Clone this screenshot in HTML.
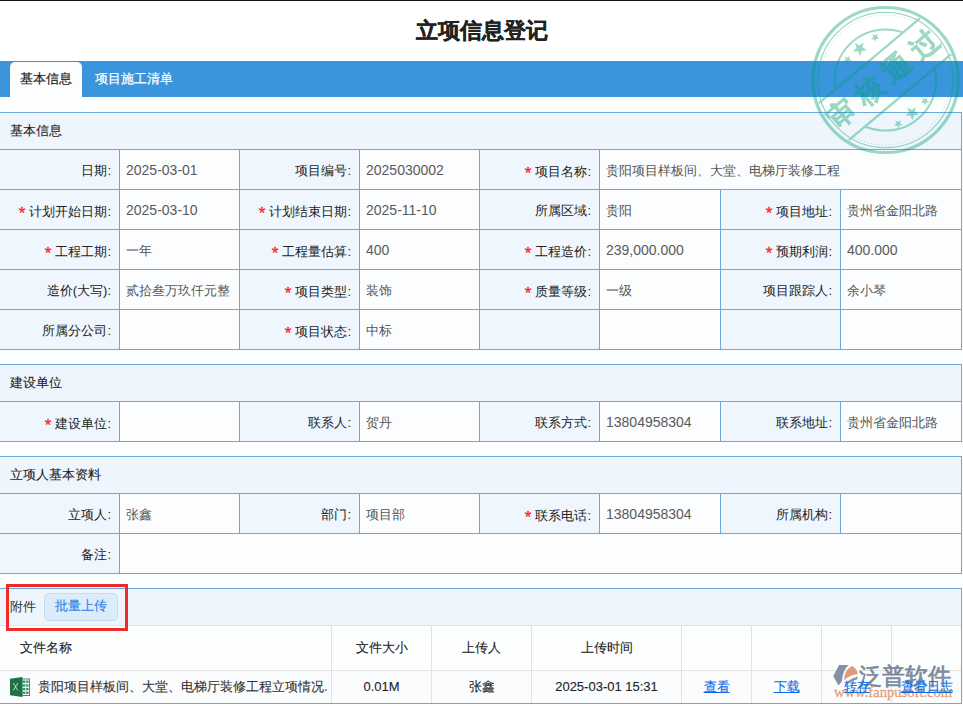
<!DOCTYPE html>
<html><head><meta charset="utf-8">
<style>
html,body{margin:0;padding:0}
body{width:963px;height:706px;overflow:hidden;position:relative;background:#fbfdfe;font-family:"Liberation Sans",sans-serif;font-size:13px;color:#333}
.ln{position:absolute}
.sh{position:absolute;left:0;width:961px;background:#eff5fd;line-height:36px;text-indent:10px;color:#222;-webkit-text-stroke:0.1px #222}
.lb{position:absolute;text-align:right;line-height:41px;color:#222;box-sizing:border-box;padding-right:8px;white-space:nowrap}
.vl{position:absolute;text-align:left;line-height:41px;color:#555;box-sizing:border-box;padding-left:6px;white-space:nowrap}
.st{color:#f22;font-size:17px;margin-right:4px;position:relative;top:3px;-webkit-text-stroke:0.3px #f22}
.nm{font-size:14px;color:#5a5a5a}
.at{position:absolute;text-align:center;white-space:nowrap;color:#222;-webkit-text-stroke:0.1px currentColor}
.nm2{font-size:13px}
#fj{position:absolute;left:10px;top:589px;line-height:36px;color:#333}
#upbtn{position:absolute;left:44px;top:593px;width:74px;height:28px;box-sizing:border-box;border:1px solid #c4dcf2;background:#ddecfa;border-radius:5px;color:#2f86e0;text-align:center;line-height:24px;-webkit-text-stroke:0.15px #2f86e0}
#redbox{position:absolute;left:6px;top:584px;width:116px;height:41px;border:3px solid #ee2a2a}
#wm{position:absolute;left:832px;top:662px;width:125px;height:40px;pointer-events:none}
#wmt{position:absolute;left:27px;top:1px;font-size:23px;line-height:26px;color:rgba(115,128,152,0.9);-webkit-text-stroke:0.7px rgba(115,128,152,0.9);letter-spacing:0px;white-space:nowrap}
#wmu{position:absolute;left:2px;top:23px;font-family:"Liberation Serif",serif;font-size:14.6px;line-height:14px;color:rgba(220,140,100,0.8);-webkit-text-stroke:0.3px rgba(220,140,100,0.8);white-space:nowrap}
#topline{position:absolute;left:0;top:0;width:963px;height:1px;background:#111}
#title{position:absolute;left:0;top:15px;width:963px;text-align:center;font-size:21.7px;font-weight:bold;color:#222;line-height:32px;-webkit-text-stroke:0.3px #222}
#tabbar{position:absolute;left:0;top:61px;width:963px;height:36px;background:#3a95dd}
#tab1{position:absolute;left:10px;top:62px;width:72px;height:35px;background:#fbfdfe;border-radius:5px 5px 0 0;text-align:center;line-height:34px;color:#222;-webkit-text-stroke:0.2px #222}
#tab2{position:absolute;left:95px;top:62px;line-height:34px;color:#fff;-webkit-text-stroke:0.2px #fff}
</style></head><body>
<div style="position:absolute;left:0;top:0;width:963px;height:61px;background:#fff"></div>
<div id="topline"></div>
<div id="title">立项信息登记</div>
<div id="tabbar"></div>
<div id="tab1">基本信息</div>
<div id="tab2">项目施工清单</div>
<div class="sh" style="top:113px;height:36px">基本信息</div>
<div class="ln" style="left:0px;top:112px;width:962px;height:1px;background:#6ea8db"></div>
<div class="ln" style="left:0px;top:149px;width:962px;height:1px;background:#6ea8db"></div>
<div class="ln" style="left:961px;top:112px;width:1px;height:38px;background:#6ea8db"></div>
<div class="lb" style="left:0px;top:150px;width:119px;height:39px;background:#eff6fd">日期:</div>
<div class="vl" style="left:120px;top:150px;width:119px;height:39px;background:#fbfdfe"><span class="nm">2025-03-01</span></div>
<div class="lb" style="left:240px;top:150px;width:119px;height:39px;background:#eff6fd">项目编号:</div>
<div class="vl" style="left:360px;top:150px;width:119px;height:39px;background:#fbfdfe"><span class="nm">2025030002</span></div>
<div class="lb" style="left:480px;top:150px;width:119px;height:39px;background:#eff6fd"><span class="st">*</span>项目名称:</div>
<div class="vl" style="left:600px;top:150px;width:361px;height:39px;background:#fbfdfe">贵阳项目样板间、大堂、电梯厅装修工程</div>
<div class="ln" style="left:0px;top:189px;width:962px;height:1px;background:#6ea8db"></div>
<div class="ln" style="left:119px;top:149px;width:1px;height:41px;background:#6ea8db"></div>
<div class="ln" style="left:239px;top:149px;width:1px;height:41px;background:#6ea8db"></div>
<div class="ln" style="left:359px;top:149px;width:1px;height:41px;background:#6ea8db"></div>
<div class="ln" style="left:479px;top:149px;width:1px;height:41px;background:#6ea8db"></div>
<div class="ln" style="left:599px;top:149px;width:1px;height:41px;background:#6ea8db"></div>
<div class="ln" style="left:961px;top:149px;width:1px;height:41px;background:#6ea8db"></div>
<div class="lb" style="left:0px;top:190px;width:119px;height:39px;background:#eff6fd"><span class="st">*</span>计划开始日期:</div>
<div class="vl" style="left:120px;top:190px;width:119px;height:39px;background:#fbfdfe"><span class="nm">2025-03-10</span></div>
<div class="lb" style="left:240px;top:190px;width:119px;height:39px;background:#eff6fd"><span class="st">*</span>计划结束日期:</div>
<div class="vl" style="left:360px;top:190px;width:119px;height:39px;background:#fbfdfe"><span class="nm">2025-11-10</span></div>
<div class="lb" style="left:480px;top:190px;width:119px;height:39px;background:#eff6fd">所属区域:</div>
<div class="vl" style="left:600px;top:190px;width:120px;height:39px;background:#fbfdfe">贵阳</div>
<div class="lb" style="left:721px;top:190px;width:119px;height:39px;background:#eff6fd"><span class="st">*</span>项目地址:</div>
<div class="vl" style="left:841px;top:190px;width:120px;height:39px;background:#fbfdfe">贵州省金阳北路</div>
<div class="ln" style="left:0px;top:229px;width:962px;height:1px;background:#6ea8db"></div>
<div class="ln" style="left:119px;top:189px;width:1px;height:41px;background:#6ea8db"></div>
<div class="ln" style="left:239px;top:189px;width:1px;height:41px;background:#6ea8db"></div>
<div class="ln" style="left:359px;top:189px;width:1px;height:41px;background:#6ea8db"></div>
<div class="ln" style="left:479px;top:189px;width:1px;height:41px;background:#6ea8db"></div>
<div class="ln" style="left:599px;top:189px;width:1px;height:41px;background:#6ea8db"></div>
<div class="ln" style="left:720px;top:189px;width:1px;height:41px;background:#6ea8db"></div>
<div class="ln" style="left:840px;top:189px;width:1px;height:41px;background:#6ea8db"></div>
<div class="ln" style="left:961px;top:189px;width:1px;height:41px;background:#6ea8db"></div>
<div class="lb" style="left:0px;top:230px;width:119px;height:39px;background:#eff6fd"><span class="st">*</span>工程工期:</div>
<div class="vl" style="left:120px;top:230px;width:119px;height:39px;background:#fbfdfe">一年</div>
<div class="lb" style="left:240px;top:230px;width:119px;height:39px;background:#eff6fd"><span class="st">*</span>工程量估算:</div>
<div class="vl" style="left:360px;top:230px;width:119px;height:39px;background:#fbfdfe"><span class="nm">400</span></div>
<div class="lb" style="left:480px;top:230px;width:119px;height:39px;background:#eff6fd"><span class="st">*</span>工程造价:</div>
<div class="vl" style="left:600px;top:230px;width:120px;height:39px;background:#fbfdfe"><span class="nm">239,000.000</span></div>
<div class="lb" style="left:721px;top:230px;width:119px;height:39px;background:#eff6fd"><span class="st">*</span>预期利润:</div>
<div class="vl" style="left:841px;top:230px;width:120px;height:39px;background:#fbfdfe"><span class="nm">400.000</span></div>
<div class="ln" style="left:0px;top:269px;width:962px;height:1px;background:#6ea8db"></div>
<div class="ln" style="left:119px;top:229px;width:1px;height:41px;background:#6ea8db"></div>
<div class="ln" style="left:239px;top:229px;width:1px;height:41px;background:#6ea8db"></div>
<div class="ln" style="left:359px;top:229px;width:1px;height:41px;background:#6ea8db"></div>
<div class="ln" style="left:479px;top:229px;width:1px;height:41px;background:#6ea8db"></div>
<div class="ln" style="left:599px;top:229px;width:1px;height:41px;background:#6ea8db"></div>
<div class="ln" style="left:720px;top:229px;width:1px;height:41px;background:#6ea8db"></div>
<div class="ln" style="left:840px;top:229px;width:1px;height:41px;background:#6ea8db"></div>
<div class="ln" style="left:961px;top:229px;width:1px;height:41px;background:#6ea8db"></div>
<div class="lb" style="left:0px;top:270px;width:119px;height:39px;background:#eff6fd">造价(大写):</div>
<div class="vl" style="left:120px;top:270px;width:119px;height:39px;background:#fbfdfe">贰拾叁万玖仟元整</div>
<div class="lb" style="left:240px;top:270px;width:119px;height:39px;background:#eff6fd"><span class="st">*</span>项目类型:</div>
<div class="vl" style="left:360px;top:270px;width:119px;height:39px;background:#fbfdfe">装饰</div>
<div class="lb" style="left:480px;top:270px;width:119px;height:39px;background:#eff6fd"><span class="st">*</span>质量等级:</div>
<div class="vl" style="left:600px;top:270px;width:120px;height:39px;background:#fbfdfe">一级</div>
<div class="lb" style="left:721px;top:270px;width:119px;height:39px;background:#eff6fd">项目跟踪人:</div>
<div class="vl" style="left:841px;top:270px;width:120px;height:39px;background:#fbfdfe">余小琴</div>
<div class="ln" style="left:0px;top:309px;width:962px;height:1px;background:#6ea8db"></div>
<div class="ln" style="left:119px;top:269px;width:1px;height:41px;background:#6ea8db"></div>
<div class="ln" style="left:239px;top:269px;width:1px;height:41px;background:#6ea8db"></div>
<div class="ln" style="left:359px;top:269px;width:1px;height:41px;background:#6ea8db"></div>
<div class="ln" style="left:479px;top:269px;width:1px;height:41px;background:#6ea8db"></div>
<div class="ln" style="left:599px;top:269px;width:1px;height:41px;background:#6ea8db"></div>
<div class="ln" style="left:720px;top:269px;width:1px;height:41px;background:#6ea8db"></div>
<div class="ln" style="left:840px;top:269px;width:1px;height:41px;background:#6ea8db"></div>
<div class="ln" style="left:961px;top:269px;width:1px;height:41px;background:#6ea8db"></div>
<div class="lb" style="left:0px;top:310px;width:119px;height:39px;background:#eff6fd">所属分公司:</div>
<div class="vl" style="left:120px;top:310px;width:119px;height:39px;background:#fbfdfe"></div>
<div class="lb" style="left:240px;top:310px;width:119px;height:39px;background:#eff6fd"><span class="st">*</span>项目状态:</div>
<div class="vl" style="left:360px;top:310px;width:119px;height:39px;background:#fbfdfe">中标</div>
<div class="lb" style="left:480px;top:310px;width:119px;height:39px;background:#eff6fd"></div>
<div class="vl" style="left:600px;top:310px;width:120px;height:39px;background:#fbfdfe"></div>
<div class="lb" style="left:721px;top:310px;width:119px;height:39px;background:#eff6fd"></div>
<div class="vl" style="left:841px;top:310px;width:120px;height:39px;background:#fbfdfe"></div>
<div class="ln" style="left:0px;top:349px;width:962px;height:1px;background:#6ea8db"></div>
<div class="ln" style="left:119px;top:309px;width:1px;height:41px;background:#6ea8db"></div>
<div class="ln" style="left:239px;top:309px;width:1px;height:41px;background:#6ea8db"></div>
<div class="ln" style="left:359px;top:309px;width:1px;height:41px;background:#6ea8db"></div>
<div class="ln" style="left:479px;top:309px;width:1px;height:41px;background:#6ea8db"></div>
<div class="ln" style="left:599px;top:309px;width:1px;height:41px;background:#6ea8db"></div>
<div class="ln" style="left:720px;top:309px;width:1px;height:41px;background:#6ea8db"></div>
<div class="ln" style="left:840px;top:309px;width:1px;height:41px;background:#6ea8db"></div>
<div class="ln" style="left:961px;top:309px;width:1px;height:41px;background:#6ea8db"></div>
<div class="sh" style="top:365px;height:36px">建设单位</div>
<div class="ln" style="left:0px;top:364px;width:962px;height:1px;background:#6ea8db"></div>
<div class="ln" style="left:0px;top:401px;width:962px;height:1px;background:#6ea8db"></div>
<div class="ln" style="left:961px;top:364px;width:1px;height:38px;background:#6ea8db"></div>
<div class="lb" style="left:0px;top:402px;width:119px;height:39px;background:#eff6fd"><span class="st">*</span>建设单位:</div>
<div class="vl" style="left:120px;top:402px;width:119px;height:39px;background:#fbfdfe"></div>
<div class="lb" style="left:240px;top:402px;width:119px;height:39px;background:#eff6fd">联系人:</div>
<div class="vl" style="left:360px;top:402px;width:119px;height:39px;background:#fbfdfe">贺丹</div>
<div class="lb" style="left:480px;top:402px;width:119px;height:39px;background:#eff6fd">联系方式:</div>
<div class="vl" style="left:600px;top:402px;width:120px;height:39px;background:#fbfdfe"><span class="nm">13804958304</span></div>
<div class="lb" style="left:721px;top:402px;width:119px;height:39px;background:#eff6fd">联系地址:</div>
<div class="vl" style="left:841px;top:402px;width:120px;height:39px;background:#fbfdfe">贵州省金阳北路</div>
<div class="ln" style="left:0px;top:441px;width:962px;height:1px;background:#6ea8db"></div>
<div class="ln" style="left:119px;top:401px;width:1px;height:41px;background:#6ea8db"></div>
<div class="ln" style="left:239px;top:401px;width:1px;height:41px;background:#6ea8db"></div>
<div class="ln" style="left:359px;top:401px;width:1px;height:41px;background:#6ea8db"></div>
<div class="ln" style="left:479px;top:401px;width:1px;height:41px;background:#6ea8db"></div>
<div class="ln" style="left:599px;top:401px;width:1px;height:41px;background:#6ea8db"></div>
<div class="ln" style="left:720px;top:401px;width:1px;height:41px;background:#6ea8db"></div>
<div class="ln" style="left:840px;top:401px;width:1px;height:41px;background:#6ea8db"></div>
<div class="ln" style="left:961px;top:401px;width:1px;height:41px;background:#6ea8db"></div>
<div class="sh" style="top:457px;height:36px">立项人基本资料</div>
<div class="ln" style="left:0px;top:456px;width:962px;height:1px;background:#6ea8db"></div>
<div class="ln" style="left:0px;top:493px;width:962px;height:1px;background:#6ea8db"></div>
<div class="ln" style="left:961px;top:456px;width:1px;height:38px;background:#6ea8db"></div>
<div class="lb" style="left:0px;top:494px;width:119px;height:39px;background:#eff6fd">立项人:</div>
<div class="vl" style="left:120px;top:494px;width:119px;height:39px;background:#fbfdfe">张鑫</div>
<div class="lb" style="left:240px;top:494px;width:119px;height:39px;background:#eff6fd">部门:</div>
<div class="vl" style="left:360px;top:494px;width:119px;height:39px;background:#fbfdfe">项目部</div>
<div class="lb" style="left:480px;top:494px;width:119px;height:39px;background:#eff6fd"><span class="st">*</span>联系电话:</div>
<div class="vl" style="left:600px;top:494px;width:120px;height:39px;background:#fbfdfe"><span class="nm">13804958304</span></div>
<div class="lb" style="left:721px;top:494px;width:119px;height:39px;background:#eff6fd">所属机构:</div>
<div class="vl" style="left:841px;top:494px;width:120px;height:39px;background:#fbfdfe"></div>
<div class="ln" style="left:0px;top:533px;width:962px;height:1px;background:#6ea8db"></div>
<div class="ln" style="left:119px;top:493px;width:1px;height:41px;background:#6ea8db"></div>
<div class="ln" style="left:239px;top:493px;width:1px;height:41px;background:#6ea8db"></div>
<div class="ln" style="left:359px;top:493px;width:1px;height:41px;background:#6ea8db"></div>
<div class="ln" style="left:479px;top:493px;width:1px;height:41px;background:#6ea8db"></div>
<div class="ln" style="left:599px;top:493px;width:1px;height:41px;background:#6ea8db"></div>
<div class="ln" style="left:720px;top:493px;width:1px;height:41px;background:#6ea8db"></div>
<div class="ln" style="left:840px;top:493px;width:1px;height:41px;background:#6ea8db"></div>
<div class="ln" style="left:961px;top:493px;width:1px;height:41px;background:#6ea8db"></div>
<div class="lb" style="left:0px;top:534px;width:119px;height:39px;background:#eff6fd">备注:</div>
<div class="vl" style="left:120px;top:534px;width:841px;height:39px;background:#fbfdfe"></div>
<div class="ln" style="left:0px;top:573px;width:962px;height:1px;background:#6ea8db"></div>
<div class="ln" style="left:119px;top:533px;width:1px;height:41px;background:#6ea8db"></div>
<div class="ln" style="left:961px;top:533px;width:1px;height:41px;background:#6ea8db"></div>
<div style="position:absolute;left:0;top:589px;width:961px;height:36px;background:#eff5fd"></div>
<div class="ln" style="left:0px;top:588px;width:962px;height:1px;background:#6ea8db"></div>
<div class="ln" style="left:0px;top:625px;width:961px;height:1px;background:#e3e3e3"></div>
<div id="fj">附件</div>
<div id="upbtn">批量上传</div>
<div style="position:absolute;left:0;top:626px;width:961px;height:44px;background:#fdfefe"></div>
<div style="position:absolute;left:0;top:671px;width:961px;height:32px;background:#fbfcfd"></div>
<div class="ln" style="left:0px;top:670px;width:961px;height:1px;background:#e3e3e3"></div>
<div class="ln" style="left:331px;top:626px;width:1px;height:77px;background:#e3e3e3"></div>
<div class="ln" style="left:431px;top:626px;width:1px;height:77px;background:#e3e3e3"></div>
<div class="ln" style="left:531px;top:626px;width:1px;height:77px;background:#e3e3e3"></div>
<div class="ln" style="left:681px;top:626px;width:1px;height:77px;background:#e3e3e3"></div>
<div class="ln" style="left:751px;top:626px;width:1px;height:77px;background:#e3e3e3"></div>
<div class="ln" style="left:821px;top:626px;width:1px;height:77px;background:#e3e3e3"></div>
<div class="ln" style="left:891px;top:626px;width:1px;height:77px;background:#e3e3e3"></div>
<div class="ln" style="left:961px;top:588px;width:1px;height:116px;background:#6ea8db"></div>
<div class="ln" style="left:0px;top:703px;width:962px;height:1px;background:#6ea8db"></div>
<div class="at" style="left:20px;top:626px;width:311px;height:44px;line-height:44px;text-align:left">文件名称</div>
<div class="at" style="left:332px;top:626px;width:99px;height:44px;line-height:44px;">文件大小</div>
<div class="at" style="left:432px;top:626px;width:99px;height:44px;line-height:44px;">上传人</div>
<div class="at" style="left:532px;top:626px;width:149px;height:44px;line-height:44px;">上传时间</div>
<div id="xls"></div>
<div class="at" style="left:38px;top:671px;width:293px;height:32px;line-height:32px;text-align:left;color:#333">贵阳项目样板间、大堂、电梯厅装修工程立项情况.</div>
<div class="at" style="left:332px;top:671px;width:99px;height:32px;line-height:32px;color:#222"><span class="nm2">0.01M</span></div>
<div class="at" style="left:432px;top:671px;width:99px;height:32px;line-height:32px;color:#222">张鑫</div>
<div class="at" style="left:532px;top:671px;width:149px;height:32px;line-height:32px;color:#222"><span class="nm2">2025-03-01 15:31</span></div>
<div id="redbox"></div>
<svg id="xls" width="20" height="20" viewBox="0 0 20 20" style="position:absolute;left:10px;top:677px"><rect x="11.5" y="2" width="8" height="16.5" fill="#fff" stroke="#3f8f5f" stroke-width="1"/><g fill="#3a9463"><rect x="12.5" y="3.5" width="6" height="2.4"/><rect x="12.5" y="7.2" width="6" height="2.4"/><rect x="12.5" y="10.9" width="6" height="2.4"/><rect x="12.5" y="14.6" width="6" height="2.4"/></g><rect x="15.3" y="3" width="0.8" height="15" fill="#e8f3ec"/><polygon points="0,1.7 12.5,0 12.5,20 0,18.3" fill="#1e7145"/><path d="M3.3 6 L7.8 13.5 M7.8 6 L3.3 13.5" stroke="#fff" stroke-width="0.7"/></svg>
<div id="wm"><svg width="30" height="28" viewBox="0 0 30 28" style="position:absolute;left:0;top:0"><path d="M1.2,14.2 L7.1,3.1 L16.9,3.1 Q11,7 9.9,19.3 L6.5,23.5 Z" fill="#8390a8"/><path d="M12,18.5 Q12.5,7 20.3,4 Q24.5,6.5 26,12 Q17,13 12,18.5 Z" fill="#dd9c80"/><path d="M12,25.5 Q15,17 26,14.5 L25,17.5 Q18,19 12,25.5 Z" fill="#8390a8"/></svg><div id="wmt">泛普软件</div><div id="wmu">www.fanpusoft.com</div></div>
<div class="at" style="left:682px;top:671px;width:69px;height:32px;line-height:32px;color:#0b6de6"><u>查看</u></div>
<div class="at" style="left:752px;top:671px;width:69px;height:32px;line-height:32px;color:#0b6de6"><u>下载</u></div>
<div class="at" style="left:822px;top:671px;width:69px;height:32px;line-height:32px;color:#0b6de6"><u>转存</u></div>
<div class="at" style="left:892px;top:671px;width:69px;height:32px;line-height:32px;color:#0b6de6"><u>查看日志</u></div>
<svg id="stamp" width="163" height="165" viewBox="0 0 163 165" style="position:absolute;left:800px;top:0px"><g opacity="0.39"><defs><mask id="bm"><rect width="163" height="165" fill="#fff"/><polygon points="0.42,118.62 138.31,2.92 168.91,39.39 31.02,155.09" fill="#000"/></mask></defs><g fill="none" stroke="#00a06d"><circle cx="85.5" cy="80.0" r="72.5" stroke-width="3.2"/><circle cx="85.5" cy="80.0" r="67.7" stroke-width="1.3"/><circle cx="85.5" cy="80.0" r="65" stroke-width="1" stroke-dasharray="0.9 2.6" mask="url(#bm)"/><circle cx="85.5" cy="80.0" r="50.6" stroke-width="2" mask="url(#bm)"/><line x1="18.90" y1="103.12" x2="119.83" y2="18.43" stroke-width="2.4"/><line x1="48.78" y1="140.18" x2="151.14" y2="54.29" stroke-width="2.4"/></g><g fill="#00a06d"><polygon points="54.84,42.83 59.38,45.40 63.52,42.22 62.48,47.34 66.78,50.29 61.60,50.88 60.12,55.88 57.95,51.14 52.74,51.27 56.58,47.75"/><polygon points="72.24,33.98 75.07,35.57 77.64,33.60 76.99,36.78 79.66,38.61 76.44,38.98 75.52,42.09 74.18,39.14 70.93,39.22 73.33,37.03"/><polygon points="44.64,56.08 47.47,57.67 50.04,55.70 49.39,58.88 52.06,60.71 48.84,61.08 47.92,64.19 46.58,61.24 43.33,61.32 45.73,59.13"/><polygon points="107.37,107.48 111.79,109.98 115.82,106.89 114.80,111.87 118.99,114.74 113.94,115.32 112.50,120.18 110.40,115.56 105.32,115.70 109.07,112.27"/><polygon points="122.04,97.48 124.87,99.07 127.44,97.10 126.79,100.28 129.46,102.11 126.24,102.48 125.32,105.59 123.98,102.64 120.73,102.72 123.13,100.53"/><polygon points="95.34,120.48 98.17,122.07 100.74,120.10 100.09,123.28 102.76,125.11 99.54,125.48 98.62,128.59 97.28,125.64 94.03,125.72 96.43,123.53"/><text x="86.16" y="76.40" transform="rotate(-40.0 86.16 76.40)" text-anchor="middle" dominant-baseline="central" font-size="28" font-weight="700" letter-spacing="8" stroke="#00a06d" stroke-width="0.4" style="font-family:'Liberation Sans',sans-serif">审核通过</text></g></g></svg>
</body></html>
